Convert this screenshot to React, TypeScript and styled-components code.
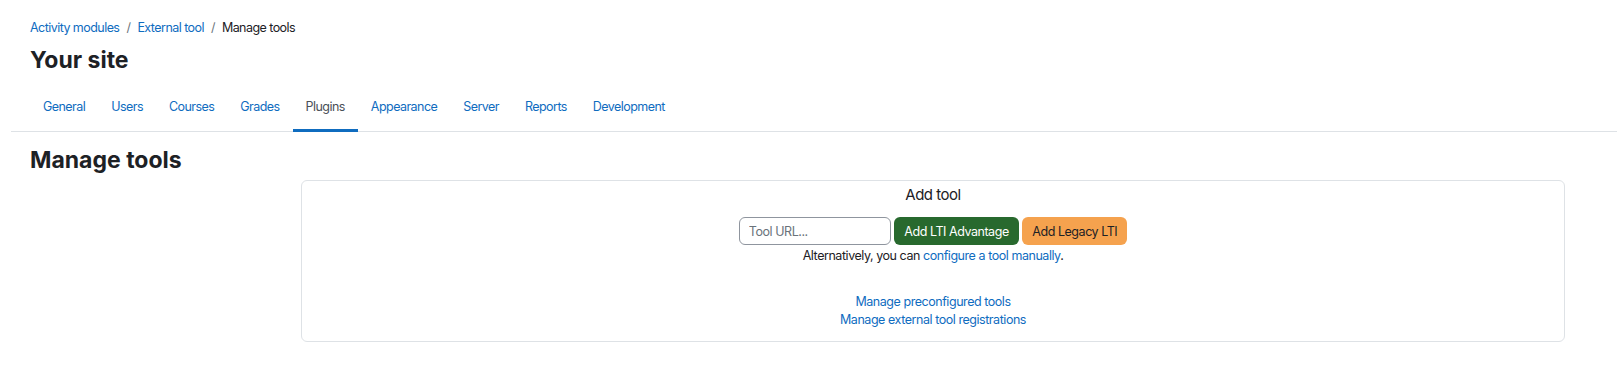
import React from 'react';
import styled, { createGlobalStyle } from 'styled-components';

const GlobalStyle = createGlobalStyle`
  body {
    margin: 0;
    background: #fff;
    font-family: Inter, "Noto Sans", sans-serif;
    color: #1d2125;
  }
`;

const Page = styled.div`
  width: 1617px;
  height: 379px;
  overflow: hidden;
`;

const Header = styled.header`
  padding: 18px 0 0 30px;
`;

const Breadcrumb = styled.nav`
  display: flex;
  align-items: center;
  font-size: 12.5px;
  letter-spacing: -0.55px;
  line-height: 20px;
`;

const Crumb = styled.a<{ current?: boolean }>`
  color: ${props => (props.current ? '#1d2125' : '#0f6cbf')};
  text-decoration: none;
`;

const Sep = styled.span`
  color: #6a737b;
  padding: 0 7px;
`;

const PageTitle = styled.h1`
  margin: 9px 0 0;
  font-size: 23px;
  line-height: 27px;
  font-weight: 700;
  letter-spacing: 0;
`;

const Tabs = styled.ul`
  display: flex;
  list-style: none;
  margin: 15px 0 0 11px;
  padding: 0 0 0 19px;
  border-bottom: 1px solid #dee2e6;
`;

const Tab = styled.li<{ active?: boolean }>`
  margin-bottom: -1px;
  padding: 8px 13px 12px;
  font-size: 12.5px;
  letter-spacing: -0.55px;
  line-height: 20px;
  color: ${props => (props.active ? '#495057' : '#0f6cbf')};
  border-bottom: 3px solid ${props => (props.active ? '#0f6cbf' : 'transparent')};
`;

const Main = styled.main`
  padding: 0 52px 0 30px;
`;

const SectionTitle = styled.h2`
  margin: 15px 0 0;
  font-size: 23px;
  line-height: 27px;
  font-weight: 700;
  letter-spacing: 0;
`;

const FormRow = styled.div`
  display: grid;
  grid-template-columns: 271px 1fr;
  margin-top: 6px;
`;

const Card = styled.section`
  grid-column: 2;
  height: 162px;
  box-sizing: border-box;
  border: 1px solid #dee2e6;
  border-radius: 6px;
  padding: 1px 16px 0;
  display: flex;
  flex-direction: column;
  align-items: center;
  font-size: 12.5px;
  letter-spacing: -0.45px;
`;

const CardTitle = styled.div`
  font-size: 15px;
  letter-spacing: -0.5px;
  line-height: 23px;
  margin-top: 1px;
`;

const Controls = styled.div`
  display: flex;
  gap: 3.5px;
  margin-top: 11px;
`;

const UrlInput = styled.input`
  width: 152px;
  height: 28px;
  box-sizing: border-box;
  border: 1px solid #8f959e;
  border-radius: 6px;
  padding: 0 9px;
  font-family: inherit;
  font-size: 12.5px;
  letter-spacing: -0.45px;
  color: #1d2125;
  outline: none;
  &::placeholder {
    color: #6a737b;
  }
`;

const Button = styled.button<{ variant: 'success' | 'warning' }>`
  height: 28px;
  border: none;
  border-radius: 6px;
  padding: 0 10px;
  font-family: inherit;
  font-size: 12.5px;
  letter-spacing: -0.45px;
  cursor: pointer;
  color: ${props => (props.variant === 'success' ? '#fff' : '#1d2125')};
  background: ${props => (props.variant === 'success' ? '#28692e' : '#f5a24e')};
`;

const Note = styled.div`
  line-height: 20px;
  margin-top: 1px;
`;

const Link = styled.a`
  color: #0f6cbf;
  text-decoration: none;
`;

const LinkList = styled.div`
  display: flex;
  flex-direction: column;
  align-items: center;
  margin-top: 27px;
  line-height: 17.6px;
`;

const tabs = ['General', 'Users', 'Courses', 'Grades', 'Plugins', 'Appearance', 'Server', 'Reports', 'Development'];

const App: React.FC = () => (
  <Page>
    <GlobalStyle />
    <Header>
      <Breadcrumb>
        <Crumb href="#">Activity modules</Crumb>
        <Sep>/</Sep>
        <Crumb href="#">External tool</Crumb>
        <Sep>/</Sep>
        <Crumb current>Manage tools</Crumb>
      </Breadcrumb>
      <PageTitle>Your site</PageTitle>
    </Header>
    <Tabs>
      {tabs.map(t => (
        <Tab key={t} active={t === 'Plugins'}>{t}</Tab>
      ))}
    </Tabs>
    <Main>
      <SectionTitle>Manage tools</SectionTitle>
      <FormRow>
        <Card>
          <CardTitle>Add tool</CardTitle>
          <Controls>
            <UrlInput placeholder="Tool URL..." />
            <Button variant="success">Add LTI Advantage</Button>
            <Button variant="warning">Add Legacy LTI</Button>
          </Controls>
          <Note>
            Alternatively, you can <Link href="#">configure a tool manually</Link>.
          </Note>
          <LinkList>
            <Link href="#">Manage preconfigured tools</Link>
            <Link href="#">Manage external tool registrations</Link>
          </LinkList>
        </Card>
      </FormRow>
    </Main>
  </Page>
);

export default App;
